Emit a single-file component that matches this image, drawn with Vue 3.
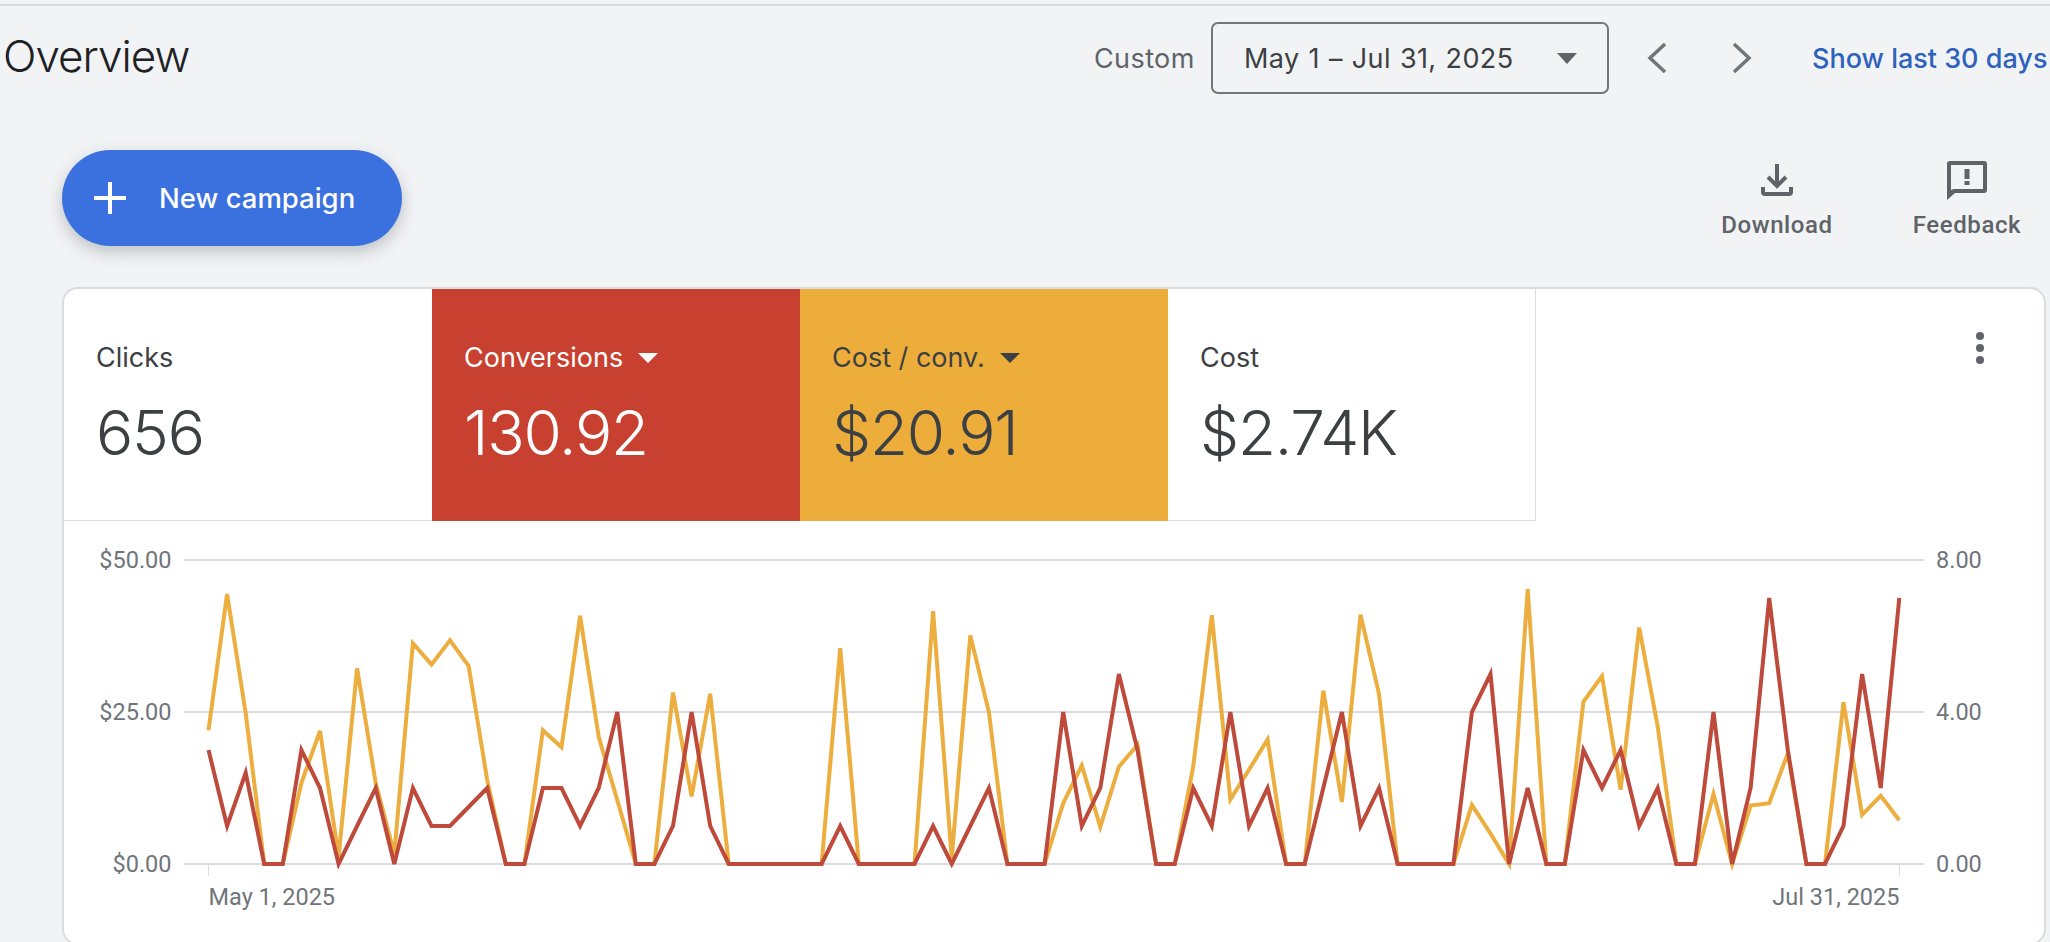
<template>
  <div class="page">
    <header class="top-bar">
      <h1 class="title">Overview</h1>
      <div class="date-tools">
        <span class="range-label">Custom</span>
        <button type="button" class="range-select">
          <span>May 1 – Jul 31, 2025</span>
          <span class="select-caret"></span>
        </button>
        <button type="button" class="arrow-btn" aria-label="Previous">
          <svg width="21" height="30" viewBox="0 0 21 30"><path d="M19 1 4 15l15 14" /></svg>
        </button>
        <button type="button" class="arrow-btn" aria-label="Next">
          <svg width="21" height="30" viewBox="0 0 21 30"><path d="M2 1l15 14L2 29" /></svg>
        </button>
        <a class="last-days">Show last 30 days</a>
      </div>
    </header>

    <div class="action-row">
      <button type="button" class="new-campaign">
        <svg width="32" height="32" viewBox="0 0 32 32"><path d="M16 0v32M0 16h32" /></svg>
        <span>New campaign</span>
      </button>
      <div class="actions">
        <button type="button" class="action-btn">
          <span class="action-icon">
            <svg width="34" height="34" viewBox="0 0 34 34">
              <path d="M17 1v21M8 14l9 9 9-9M3 24v5a2 2 0 0 0 2 2h24a2 2 0 0 0 2-2v-5" />
            </svg>
          </span>
          <span>Download</span>
        </button>
        <button type="button" class="action-btn">
          <span class="action-icon">
            <svg width="40" height="39" viewBox="0 0 40 39">
              <path class="fill" d="M3 0h34a3 3 0 0 1 3 3v26a3 3 0 0 1-3 3H8l-8 7V3a3 3 0 0 1 3-3zm1 4v25l2.500-1H36V4H4z" />
              <path class="fill" d="M17.500 8h5v10h-5zM17.500 20h5v4h-5z" />
            </svg>
          </span>
          <span>Feedback</span>
        </button>
      </div>
    </div>

    <section class="card">
      <div class="tile-row">
        <div v-for="tile in tiles" :key="tile.label" class="tile" :class="tile.tone">
          <div class="tile-label">
            {{ tile.label }}
            <span v-if="tile.tone" class="tile-caret"></span>
          </div>
          <div class="tile-value">{{ tile.value }}</div>
        </div>
        <div class="tile-spacer">
          <span class="more-menu"><i></i><i></i><i></i></span>
        </div>
      </div>

      <svg class="chart" width="1980" height="420" viewBox="0 0 1980 420">
        <line v-for="row in axis" :key="row.left" class="grid-line" x1="120" x2="1860" :y1="row.y" :y2="row.y" />
        <line class="tick" x1="144.500" x2="144.500" y1="343" y2="355" />
        <line class="tick" x1="1835.500" x2="1835.500" y1="343" y2="355" />
        <polyline class="line-cost" :points="costPoints" />
        <polyline class="line-conv" :points="convPoints" />
        <template v-for="row in axis" :key="row.left">
          <text class="axis-text" x="107.500" :y="row.y + 8.300" text-anchor="end">{{ row.left }}</text>
          <text class="axis-text" x="1872" :y="row.y + 8.300">{{ row.right }}</text>
        </template>
        <text class="axis-text" x="144.500" y="384">May 1, 2025</text>
        <text class="axis-text" x="1835.500" y="384" text-anchor="end">Jul 31, 2025</text>
      </svg>
    </section>
  </div>
</template>

<script setup>
import { computed } from 'vue'

const tiles = [
  { label: 'Clicks', value: '656', tone: '' },
  { label: 'Conversions', value: '130.92', tone: 'is-red' },
  { label: 'Cost / conv.', value: '$20.91', tone: 'is-yellow' },
  { label: 'Cost', value: '$2.74K', tone: '' },
]

const axis = [
  { y: 39, left: '$50.00', right: '8.00' },
  { y: 191, left: '$25.00', right: '4.00' },
  { y: 343, left: '$0.00', right: '0.00' },
]

// daily values, May 1 to Jul 31
const cost = [
  22, 44.4, 24.8, 0, 0, 13.3, 21.9, 1.2, 32.2, 13.3, 1.7, 36.3, 32.8, 36.8, 32.6, 13.8,
  0, 0, 22, 19.2, 40.8, 20.9, 10.5, 0, 0, 28.2, 11.1, 28, 0, 0, 0, 0, 0, 0, 35.5, 0,
  0, 0, 0, 41.6, 0.9, 37.6, 25, 0, 0, 0, 10, 16.2, 6.1, 16, 19.6, 0, 0, 16, 40.9, 10.6,
  15.5, 20.5, 0, 0, 28.5, 10.2, 41, 28, 0, 0, 0, 0, 9.7, 5, 0, 45.2, 0, 0, 26.7, 30.9,
  12.2, 38.9, 22.6, 0, 0, 11.5, 0, 9.6, 10, 18.2, 0, 0, 26.6, 8.1, 11.2, 7.2,
]

const conversions = [
  3, 1, 2.4, 0, 0, 3, 2, 0, 1, 2, 0, 2, 1, 1, 1.5, 2, 0, 0, 2, 2, 1, 2, 4, 0, 0, 1, 4, 1,
  0, 0, 0, 0, 0, 0, 1, 0, 0, 0, 0, 1, 0, 1, 2, 0, 0, 0, 4, 1, 2, 5, 3, 0, 0, 2, 1, 4, 1, 2,
  0, 0, 2, 4, 1, 2, 0, 0, 0, 0, 4, 5, 0, 2, 0, 0, 3, 2, 3, 1, 2, 0, 0, 4, 0, 2, 7, 3, 0, 0,
  1, 5, 2, 7,
]

const toPoints = (list, max) =>
  list.map((v, i) => `${(144.5 + i * 18.58).toFixed(1)},${(343 - (v / max) * 304).toFixed(1)}`).join(' ')

const costPoints = computed(() => toPoints(cost, 50))
const convPoints = computed(() => toPoints(conversions, 8))
</script>

<style scoped>
.page {
  width: 2050px;
  height: 942px;
  padding-top: 4px;
  box-sizing: border-box;
  overflow: hidden;
  background: #f1f3f5;
  font-family: Inter, 'Noto Sans', sans-serif;
  color: #3c4043;
}

button {
  padding: 0;
  border: none;
  background: none;
  font: inherit;
  color: inherit;
  cursor: pointer;
}

.top-bar {
  display: flex;
  align-items: center;
  justify-content: space-between;
  height: 106px;
  margin-bottom: 40px;
  padding-left: 3px;
  border-top: 2px solid #dadce0;
  box-sizing: border-box;
}

.title {
  margin: 0 0 5px;
  font-size: 44px;
  font-weight: 300;
  letter-spacing: -1px;
  color: #202124;
}

.date-tools {
  display: flex;
  align-items: center;
  width: 956px;
  flex: none;
  white-space: nowrap;
  font-size: 27px;
}

.range-label {
  width: 117px;
  flex: none;
  letter-spacing: 0.4px;
  color: #5f6368;
}

.range-select {
  display: flex;
  align-items: center;
  justify-content: space-between;
  width: 398px;
  height: 72px;
  padding: 0 30px 0 31px;
  border: 2px solid #747775;
  border-radius: 7px;
  box-sizing: border-box;
  flex: none;
  letter-spacing: 0.4px;
  word-spacing: 1px;
}

.select-caret {
  border-top: 11px solid #5f6368;
  border-left: 10.500px solid transparent;
  border-right: 10.500px solid transparent;
}

.arrow-btn {
  display: flex;
  flex: none;
  margin-left: 37px;
}

.arrow-btn + .arrow-btn {
  margin-left: 65px;
}

.arrow-btn path {
  fill: none;
  stroke: #70757a;
  stroke-width: 3.500px;
}

.last-days {
  margin-left: 59px;
  font-weight: 500;
  color: #2f62bd;
}

.action-row {
  display: flex;
  align-items: flex-start;
  justify-content: space-between;
  height: 137px;
  padding-left: 62px;
}

.new-campaign {
  display: flex;
  align-items: center;
  gap: 33px;
  width: 340px;
  height: 96px;
  padding-left: 32px;
  border-radius: 48px;
  box-sizing: border-box;
  background: #3a71df;
  box-shadow: 0 6px 16px rgba(60, 64, 67, 0.28);
  color: #fff;
  font-size: 27.500px;
  font-weight: 500;
}

.new-campaign path {
  fill: none;
  stroke: #fff;
  stroke-width: 4px;
}

.actions {
  display: flex;
  margin-right: 18px;
  gap: 60px;
}

.action-btn {
  display: flex;
  flex-direction: column;
  align-items: center;
  width: 130px;
  margin-top: 10px;
  gap: 11px;
  color: #5f6368;
  font-family: Roboto, sans-serif;
  font-size: 24px;
  font-weight: 500;
  line-height: 28px;
  letter-spacing: 0.6px;
}

.action-icon {
  display: flex;
  align-items: center;
  height: 40px;
}

.action-btn path {
  fill: none;
  stroke: #5f6368;
  stroke-width: 4px;
}

.action-btn path.fill {
  fill: #5f6368;
  fill-rule: evenodd;
  stroke: none;
}

.card {
  width: 1984px;
  height: 658px;
  margin-left: 62px;
  border: 2px solid #dadce0;
  border-radius: 16px;
  box-sizing: border-box;
  overflow: hidden;
  background: #fff;
}

.tile-row {
  display: flex;
  height: 232px;
}

.tile {
  width: 368px;
  flex: none;
  padding: 54px 0 0 32px;
  box-sizing: border-box;
  border-bottom: 1px solid #dadce0;
}

.tile:nth-child(4) {
  border-right: 1px solid #dadce0;
}

.tile.is-red {
  background: #c8402f;
  border-bottom: none;
  color: #fff;
}

.tile.is-yellow {
  background: #edad3b;
  border-bottom: none;
}

.tile-label {
  display: flex;
  align-items: center;
  gap: 15px;
  font-size: 27px;
  line-height: 30px;
}

.tile-caret {
  border-top: 10.500px solid currentColor;
  border-left: 10px solid transparent;
  border-right: 10px solid transparent;
}

.tile-value {
  margin-top: 25px;
  font-size: 62px;
  font-weight: 300;
  line-height: 70px;
  letter-spacing: -1.200px;
}

.tile-spacer {
  position: relative;
  flex: 1;
}

.more-menu {
  position: absolute;
  top: 43px;
  right: 60px;
  display: flex;
  flex-direction: column;
  gap: 4px;
}

.more-menu i {
  width: 8px;
  height: 8px;
  border-radius: 50%;
  background: #5f6368;
}

.chart {
  display: block;
}

.grid-line {
  stroke: #dadce0;
  stroke-width: 2px;
}

.tick {
  stroke: #dadce0;
  stroke-width: 1px;
}

.line-cost,
.line-conv {
  fill: none;
  stroke-width: 4px;
  stroke-linejoin: miter;
}

.line-cost {
  stroke: #ecae3e;
}

.line-conv {
  stroke: #bd4a3a;
}

.axis-text {
  font-family: Roboto, sans-serif;
  font-size: 23.500px;
  fill: #70757a;
}
</style>

<style>
body {
  background: #f1f3f5;
}
</style>
